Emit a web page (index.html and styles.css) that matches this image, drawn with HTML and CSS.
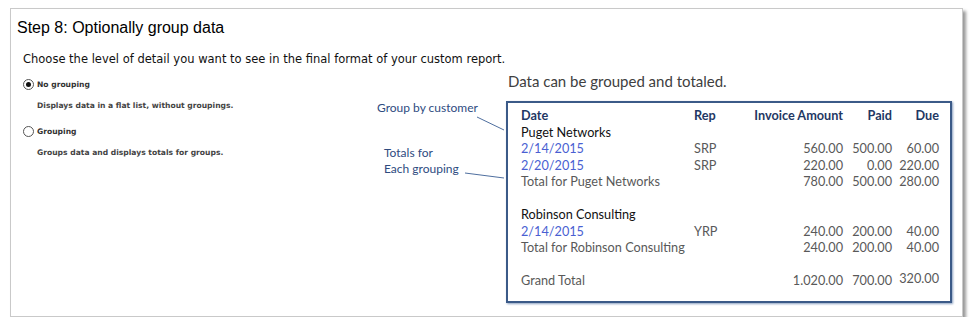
FILE: index.html
```html
<!DOCTYPE html>
<html>
<head>
<meta charset="utf-8">
<link rel="stylesheet" href="styles.css">
</head>
<body>
<div class="frame">
  <h1 class="title">Step 8: Optionally group data</h1>
  <p class="intro">Choose the level of detail you want to see in the final format of your custom report.</p>
  <div class="content">
    <div class="options">
      <div class="option">
        <span class="radio checked"></span><span class="label">No grouping</span>
      </div>
      <div class="desc">Displays data in a flat list, without groupings.</div>
      <div class="option">
        <span class="radio"></span><span class="label">Grouping</span>
      </div>
      <div class="desc">Groups data and displays totals for groups.</div>
    </div>
    <div class="figure">
      <div class="notes">
        <div class="note note-group">Group by customer</div>
        <div class="note note-totals">Totals for<br>Each grouping</div>
      </div>
      <div class="sample">
        <div class="caption">Data can be grouped and totaled.</div>
        <div class="box">
          <table class="report">
            <colgroup>
              <col class="c-date"><col class="c-rep"><col class="c-inv"><col class="c-paid"><col class="c-due">
            </colgroup>
            <thead>
              <tr><th class="l">Date</th><th class="l">Rep</th><th class="r">Invoice Amount</th><th class="r">Paid</th><th class="r">Due</th></tr>
            </thead>
            <tbody>
              <tr class="grp"><td colspan="5">Puget Networks</td></tr>
              <tr><td class="date">2/14/2015</td><td>SRP</td><td class="r">560.00</td><td class="r">500.00</td><td class="r">60.00</td></tr>
              <tr><td class="date">2/20/2015</td><td>SRP</td><td class="r">220.00</td><td class="r">0.00</td><td class="r">220.00</td></tr>
              <tr><td>Total for Puget Networks</td><td></td><td class="r">780.00</td><td class="r">500.00</td><td class="r">280.00</td></tr>
              <tr class="gap"><td colspan="5"></td></tr>
              <tr class="grp"><td colspan="5">Robinson Consulting</td></tr>
              <tr><td class="date">2/14/2015</td><td>YRP</td><td class="r">240.00</td><td class="r">200.00</td><td class="r">40.00</td></tr>
              <tr><td>Total for Robinson Consulting</td><td></td><td class="r">240.00</td><td class="r">200.00</td><td class="r">40.00</td></tr>
              <tr class="gap"><td colspan="5"></td></tr>
              <tr class="grand"><td>Grand Total</td><td></td><td class="r">1.020.00</td><td class="r">700.00</td><td class="r due-up">320.00</td></tr>
            </tbody>
          </table>
        </div>
      </div>
      <svg class="leaders" width="60" height="80" viewBox="0 0 60 80">
        <line x1="0" y1="7" x2="27" y2="20" />
        <line x1="-12" y1="63" x2="27" y2="68" />
      </svg>
    </div>
  </div>
</div>
</body>
</html>
```

FILE: styles.css
```css
* { box-sizing: border-box; }

html, body {
  margin: 0;
  padding: 0;
  background: #ffffff;
}

.frame {
  margin: 8px 0 0 10px;
  width: 953px;
  height: 309px;
  border: 1px solid #c9c9c9;
  box-shadow: 3px 3px 3px #9a9a9a;
  padding: 9px 0 0 6px;
  background: #fff;
}

.title {
  margin: 0;
  font-family: "Liberation Sans", Arial, sans-serif;
  font-weight: normal;
  font-size: 16px;
  line-height: 20px;
  color: #000;
}

.intro {
  margin: 13px 0 0 6px;
  font-family: "DejaVu Sans", Verdana, sans-serif;
  font-size: 11.5px;
  line-height: 16px;
  color: #111;
}

.content {
  display: flex;
  margin-top: 3px;
}

.options {
  width: 360px;
  padding: 7px 0 0 6px;
  font-family: "DejaVu Sans", Verdana, sans-serif;
  font-size: 7.6px;
  color: #222;
}

.option {
  display: flex;
  align-items: center;
  height: 14px;
}

.radio {
  width: 11px;
  height: 11px;
  border: 1px solid #555;
  border-radius: 50%;
  margin-right: 3px;
  display: flex;
  align-items: center;
  justify-content: center;
  background: #fff;
}

.radio.checked::after {
  content: "";
  width: 5px;
  height: 5px;
  border-radius: 50%;
  background: #111;
}

.label { font-weight: bold; color: #333; }

.desc {
  margin: 9px 0 12px 14px;
  line-height: 12px;
  font-weight: bold;
  color: #444;
}

.figure {
  position: relative;
  display: flex;
}

.notes {
  width: 129px;
  padding-top: 30px;
  font-family: Lato, "Open Sans", sans-serif;
  font-size: 12px;
  color: #2e4b7f;
}

.note-group { line-height: 16px; }

.note-totals {
  margin: 29px 0 0 7px;
  line-height: 16px;
}

.sample {
  display: flex;
  flex-direction: column;
}

.caption {
  font-family: Lato, "Open Sans", sans-serif;
  font-size: 15px;
  line-height: 18px;
  color: #404040;
  margin: 2px 0 11px 2px;
}

.box {
  width: 446px;
  height: 202px;
  border: 2px solid #3b5a88;
  box-shadow: 1px 1px 2px #8aa0c0;
  padding: 4px 11px 0 13px;
}

.report {
  border-collapse: collapse;
  table-layout: fixed;
  width: 418px;
  font-family: Lato, "Open Sans", sans-serif;
  font-size: 12.7px;
  color: #595959;
}

.c-date { width: 173px; }
.c-rep { width: 60px; }
.c-inv { width: 89px; }
.c-paid { width: 49px; }
.c-due { width: 47px; }

.report th, .report td {
  padding: 0;
  height: 16.5px;
  line-height: 16.5px;
  white-space: nowrap;
}

.report th {
  font-weight: bold;
  color: #1f3864;
}

.l { text-align: left; }
.r { text-align: right; }

.grp td { color: #111; }
.date { color: #4a5fd2; }
.gap td { height: 16.5px; }
.due-up { position: relative; top: -2px; }

.leaders {
  position: absolute;
  left: 100px;
  top: 40px;
  overflow: visible;
}

.leaders line {
  stroke: #4f6f9f;
  stroke-width: 1;
}
```
